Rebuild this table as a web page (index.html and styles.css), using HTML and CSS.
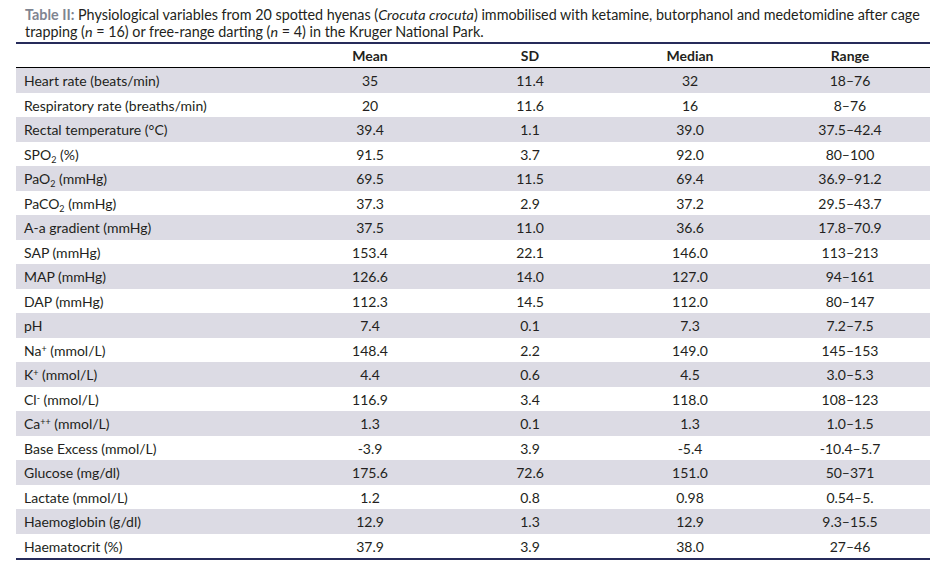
FILE: index.html
```html
<!DOCTYPE html>
<html>
<head>
<meta charset="utf-8">
<link rel="stylesheet" href="styles.css">
</head>
<body>
<div class="page">
  <p class="caption"><span class="label">Table II:</span> Physiological variables from 20 spotted hyenas (<i>Crocuta crocuta</i>) immobilised with ketamine, butorphanol and medetomidine after cage trapping (<i>n</i> = 16) or free-range darting (<i>n</i> = 4) in the Kruger National Park.</p>
  <table class="data">
    <thead>
      <tr><th class="name"></th><th>Mean</th><th>SD</th><th>Median</th><th>Range</th></tr>
    </thead>
    <tbody>
      <tr><td class="name">Heart rate (beats/min)</td><td>35</td><td>11.4</td><td>32</td><td>18–76</td></tr>
      <tr><td class="name">Respiratory rate (breaths/min)</td><td>20</td><td>11.6</td><td>16</td><td>8–76</td></tr>
      <tr><td class="name">Rectal temperature (°C)</td><td>39.4</td><td>1.1</td><td>39.0</td><td>37.5–42.4</td></tr>
      <tr><td class="name">SPO<sub>2</sub> (%)</td><td>91.5</td><td>3.7</td><td>92.0</td><td>80–100</td></tr>
      <tr><td class="name">PaO<sub>2</sub> (mmHg)</td><td>69.5</td><td>11.5</td><td>69.4</td><td>36.9–91.2</td></tr>
      <tr><td class="name">PaCO<sub>2</sub> (mmHg)</td><td>37.3</td><td>2.9</td><td>37.2</td><td>29.5–43.7</td></tr>
      <tr><td class="name">A-a gradient (mmHg)</td><td>37.5</td><td>11.0</td><td>36.6</td><td>17.8–70.9</td></tr>
      <tr><td class="name">SAP (mmHg)</td><td>153.4</td><td>22.1</td><td>146.0</td><td>113–213</td></tr>
      <tr><td class="name">MAP (mmHg)</td><td>126.6</td><td>14.0</td><td>127.0</td><td>94–161</td></tr>
      <tr><td class="name">DAP (mmHg)</td><td>112.3</td><td>14.5</td><td>112.0</td><td>80–147</td></tr>
      <tr><td class="name">pH</td><td>7.4</td><td>0.1</td><td>7.3</td><td>7.2–7.5</td></tr>
      <tr><td class="name">Na<sup>+</sup> (mmol/L)</td><td>148.4</td><td>2.2</td><td>149.0</td><td>145–153</td></tr>
      <tr><td class="name">K<sup>+</sup> (mmol/L)</td><td>4.4</td><td>0.6</td><td>4.5</td><td>3.0–5.3</td></tr>
      <tr><td class="name">Cl<sup>-</sup> (mmol/L)</td><td>116.9</td><td>3.4</td><td>118.0</td><td>108–123</td></tr>
      <tr><td class="name">Ca<sup>++</sup> (mmol/L)</td><td>1.3</td><td>0.1</td><td>1.3</td><td>1.0–1.5</td></tr>
      <tr><td class="name">Base Excess (mmol/L)</td><td>-3.9</td><td>3.9</td><td>-5.4</td><td>-10.4–5.7</td></tr>
      <tr><td class="name">Glucose (mg/dl)</td><td>175.6</td><td>72.6</td><td>151.0</td><td>50–371</td></tr>
      <tr><td class="name">Lactate (mmol/L)</td><td>1.2</td><td>0.8</td><td>0.98</td><td>0.54–5.</td></tr>
      <tr><td class="name">Haemoglobin (g/dl)</td><td>12.9</td><td>1.3</td><td>12.9</td><td>9.3–15.5</td></tr>
      <tr><td class="name">Haematocrit (%)</td><td>37.9</td><td>3.9</td><td>38.0</td><td>27–46</td></tr>
    </tbody>
  </table>
</div>
</body>
</html>
```
FILE: styles.css
```css
html, body {
  margin: 0;
  padding: 0;
  background: #ffffff;
}
.page {
  padding: 5.5px 0 0 16px;
  width: 914px;
  font-family: Lato, "Liberation Sans", sans-serif;
  font-size: 14px;
  color: #231f20;
}
.caption {
  margin: 0 0 2px 0;
  padding-left: 9px;
  font-size: 14.35px;
  line-height: 17.4px;
}
.caption .label {
  font-weight: bold;
  color: #7f8591;
}
.data {
  width: 914px;
  border-collapse: collapse;
  table-layout: fixed;
  border-top: 2px solid #262b5a;
  border-bottom: 2px solid #262b5a;
}
.data th {
  width: 160px;
  height: 23px;
  padding: 0;
  font-weight: bold;
  text-align: center;
  border-bottom: 1px solid #000000;
}
.data th.name {
  width: 274px;
}
.data td {
  height: 24.5px;
  padding: 0;
  text-align: center;
  line-height: 17px;
}
.data td.name {
  text-align: left;
  padding-left: 8px;
}
.data tbody tr:nth-child(odd) td {
  background: #dcdbe4;
}
.data sub, .data sup {
  font-size: 9px;
  line-height: 0;
}
.data sub {
  vertical-align: -3px;
}
.data sup {
  vertical-align: 4px;
}
```
